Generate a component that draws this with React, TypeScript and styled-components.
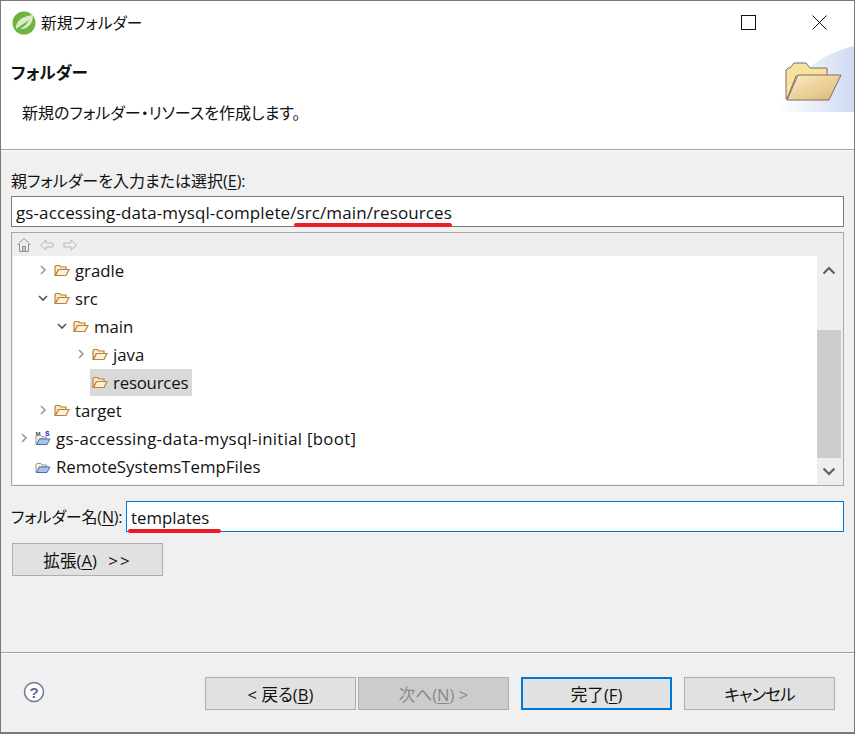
import React from "react";
import styled, { createGlobalStyle } from "styled-components";

const GlobalStyle = createGlobalStyle`
  html, body {
    margin: 0;
    padding: 0;
    background: #f0f0f0;
  }
  body {
    font-family: "Open Sans", "Noto Sans CJK JP", sans-serif;
    font-size: 16px;
    color: #111;
  }
`;

const Dialog = styled.div`
  width: 855px;
  height: 734px;
  box-sizing: border-box;
  border: 1px solid #7a7a7a;
  border-bottom-width: 2px;
  display: flex;
  flex-direction: column;
  background: #f0f0f0;
`;

const TitleBar = styled.div`
  height: 44px;
  flex: none;
  background: #fff;
  display: flex;
  align-items: center;
  padding-left: 11px;
  box-sizing: border-box;
`;

const TitleText = styled.span`
  margin-left: 5px;
  font-size: 15.7px;
  font-feature-settings: "palt";
  flex: 1;
  position: relative;
  top: -1px;
`;

const WindowButton = styled.div`
  width: 69px;
  height: 43px;
  margin-left: 2px;
  align-self: flex-start;
  display: flex;
  align-items: center;
  justify-content: center;
`;

const Banner = styled.div`
  position: relative;
  height: 104px;
  flex: none;
  background: #fff;
  border-bottom: 1px solid #a0a0a0;
  box-shadow: 0 1px 0 #fff;
`;

const BannerTitle = styled.h1`
  margin: 0;
  padding: 16px 0 0 10px;
  font-size: 16.6px;
  line-height: 24px;
  font-weight: 700;
  font-feature-settings: "palt";
`;

const BannerText = styled.p`
  margin: 0;
  padding: 16px 0 0 21px;
  font-size: 16px;
  line-height: 24px;
  font-feature-settings: "palt";
`;

const BannerArt = styled.svg`
  position: absolute;
  right: 0;
  top: 1px;
`;

const Body = styled.div`
  flex: 1;
  display: flex;
  flex-direction: column;
  padding: 19px 10px 0 10px;
  margin-top: 1px;
`;

const FieldLabel = styled.label`
  display: block;
  line-height: 22px;
  height: 22px;
  font-feature-settings: "palt";
  white-space: nowrap;
`;

const Key = styled.span`
  text-decoration: underline;
  text-underline-offset: 2px;
`;

const PathBox = styled.div`
  position: relative;
  height: 31px;
  margin-top: 4px;
  box-sizing: border-box;
  border: 1px solid #7a7a7a;
  background: #fff;
  padding: 0 4px;
  line-height: 31px;
  font-size: 17px;
  letter-spacing: 0.1px;
  white-space: nowrap;
`;

const RedMark = styled.span<{ $left: number; $width: number; $bottom: number }>`
  position: absolute;
  left: ${(p) => p.$left}px;
  width: ${(p) => p.$width}px;
  bottom: ${(p) => p.$bottom}px;
  height: 4px;
  border-radius: 2px;
  background: #ed1c24;
`;

const TreeFrame = styled.div`
  height: 254px;
  margin-top: 5px;
  box-sizing: border-box;
  border: 1px solid #a8a8a8;
  padding: 1px 2px 1px 1px;
  display: flex;
  flex-direction: column;
  background: #eeeeee;
`;

const TreeToolbar = styled.div`
  height: 22px;
  flex: none;
  display: flex;
  align-items: center;
  gap: 7px;
  padding-left: 3px;
`;

const TreeBody = styled.div`
  flex: 1;
  display: flex;
  min-height: 0;
`;

const TreeList = styled.div`
  flex: 1;
  background: #fff;
  overflow: hidden;
`;

const Row = styled.div<{ $depth: number }>`
  height: 28px;
  display: flex;
  align-items: center;
  padding-left: ${(p) => 6 + p.$depth * 19}px;
  white-space: nowrap;
  font-size: 16.8px;
`;

const Twisty = styled.span`
  width: 10px;
  height: 12px;
  flex: none;
  margin-right: 6px;
  display: flex;
  align-items: center;
  justify-content: center;
`;

const NodeLabel = styled.span<{ $selected?: boolean; $spacing?: number }>`
  display: inline-flex;
  align-items: center;
  gap: 5px;
  height: 27px;
  margin-left: -2px;
  padding: 0 4px 0 2px;
  letter-spacing: ${(p) => p.$spacing ?? 0}px;
  background: ${(p) => (p.$selected ? "#d9d9d9" : "transparent")};
`;

const ScrollBar = styled.div`
  width: 24px;
  flex: none;
  background: #eeeeee;
  display: flex;
  flex-direction: column;
`;

const ScrollArrow = styled.div`
  height: 26px;
  flex: none;
  display: flex;
  align-items: center;
  justify-content: center;
`;

const ScrollTrack = styled.div`
  flex: 1;
  display: flex;
  flex-direction: column;
  justify-content: flex-end;
`;

const ScrollThumb = styled.div`
  height: 128px;
  background: #cdcdcd;
`;

const NameRow = styled.div`
  display: flex;
  align-items: center;
  margin-top: 15px;
`;

const NameLabel = styled(FieldLabel)`
  width: 115px;
  height: 24px;
  line-height: 24px;
  flex: none;
  letter-spacing: -0.15px;
`;

const NameInput = styled.div`
  position: relative;
  flex: 1;
  height: 31px;
  box-sizing: border-box;
  border: 1px solid #0078d7;
  background: #fff;
  padding: 0 4px;
  line-height: 31px;
  font-size: 16.8px;
`;

const Button = styled.button<{ $focused?: boolean; $disabled?: boolean; $spacing?: number }>`
  width: 151px;
  height: 33px;
  padding: 0;
  box-sizing: border-box;
  font: inherit;
  font-size: 16.6px;
  font-feature-settings: "palt";
  letter-spacing: ${(p) => p.$spacing ?? 0}px;
  color: ${(p) => (p.$disabled ? "#8a8a8a" : "#111")};
  background: ${(p) => (p.$disabled ? "#cccccc" : "#e1e1e1")};
  border: ${(p) => (p.$focused ? "2px solid #0078d7" : "1px solid #adadad")};
`;

const Arrows = styled.span`
  margin-left: 5px;
  letter-spacing: 2px;
  font-size: 17px;
`;

const ExpandRow = styled.div`
  margin-top: 11px;
  padding-left: 1px;
`;

const Footer = styled.div`
  height: 80px;
  box-sizing: border-box;
  flex: none;
  border-top: 1px solid #a0a0a0;
  box-shadow: inset 0 1px 0 #fff;
  display: flex;
  align-items: flex-start;
  padding: 24px 19px 0 22px;
`;

const HelpIcon = styled.svg`
  margin-top: 4px;
  margin-right: auto;
`;

const ButtonGroup = styled.div<{ $gap: number }>`
  display: flex;
  gap: ${(p) => p.$gap}px;
`;

const FolderIcon = () => (
  <svg width="16" height="13" viewBox="0 0 16 13">
    <path d="M1 11.5V2.5L2 1.5H5.5L7 3H12V5.5H4.5L1.5 11.5Z" fill="#fbe9c8" stroke="#b9823f" strokeWidth="1.2" />
    <path d="M1.5 11.5L4.5 5.5H15L12 11.5Z" fill="#fdf0d6" stroke="#b9823f" strokeWidth="1.2" />
  </svg>
);

const ProjectFolderIcon = ({ badge }: { badge?: boolean }) => (
  <svg width="16" height="16" viewBox="0 0 16 16">
    {badge && (
      <>
        <text x="0.5" y="5.5" fontSize="6" fontWeight="700" fill="#2a4f80" fontFamily="Liberation Sans, sans-serif">M</text>
        <text x="10" y="6" fontSize="7.5" fontWeight="700" fill="#1414d8" fontFamily="Liberation Mono, monospace">S</text>
      </>
    )}
    <path d="M1 14.5V6.5L2 5.5H6L7 7H11.5V9H4.5L1.5 14.5Z" fill="#fdf3d8" stroke="#8a93b0" />
    <path d="M1.5 14.5L4.5 9H15L12 14.5Z" fill="#a8c4ea" stroke="#4a6ea8" />
  </svg>
);

const Chevron = ({ open }: { open?: boolean }) => (
  <svg width="10" height="10" viewBox="0 0 10 10">
    {open ? (
      <path d="M1 3L5 7L9 3" fill="none" stroke="#555" strokeWidth="1.6" />
    ) : (
      <path d="M3 1L7 5L3 9" fill="none" stroke="#999" strokeWidth="1.6" />
    )}
  </svg>
);

const ScrollChevron = ({ up }: { up?: boolean }) => (
  <svg width="12" height="9" viewBox="0 0 12 9">
    <path d={up ? "M0.5 8.5L6 3L11.5 8.5" : "M0.5 1.5L6 7L11.5 1.5"} fill="none" stroke="#606060" strokeWidth="2.2" />
  </svg>
);

const rows = [
  { name: "gradle", depth: 1 },
  { name: "src", depth: 1, open: true },
  { name: "main", depth: 2, open: true },
  { name: "java", depth: 3 },
  { name: "resources", depth: 3, selected: true, leaf: true, spacing: -0.2 },
  { name: "target", depth: 1 },
  { name: "gs-accessing-data-mysql-initial [boot]", depth: 0, project: true, spacing: 0.3 },
  { name: "RemoteSystemsTempFiles", depth: 0, remote: true, leaf: true },
];

const App = (): JSX.Element => {
  return (
    <React.Fragment>
      <GlobalStyle />
      <Dialog>
        <TitleBar>
          <svg width="24" height="24" viewBox="0 0 24 24">
            <circle cx="12" cy="12" r="11.5" fill="#6db33f" />
            <path d="M4 18C3 9 12 5 21 4C21 13 15 19 8 18C12 16 15 13 17 9C13 12 8 15 4 18Z" fill="#d9ecc6" />
          </svg>
          <TitleText>新規フォルダー</TitleText>
          <WindowButton>
            <svg width="15" height="15" viewBox="0 0 15 15">
              <rect x="0.5" y="0.5" width="14" height="14" fill="none" stroke="#111" />
            </svg>
          </WindowButton>
          <WindowButton>
            <svg width="15" height="15" viewBox="0 0 15 15">
              <path d="M0.5 0.5L14.5 14.5M14.5 0.5L0.5 14.5" stroke="#111" />
            </svg>
          </WindowButton>
        </TitleBar>
        <Banner>
          <BannerTitle>フォルダー</BannerTitle>
          <BannerText>新規のフォルダー・リソースを作成します。</BannerText>
          <BannerArt width="76" height="66" viewBox="0 0 76 66">
            <defs>
              <linearGradient id="swoosh" x1="0" y1="0" x2="1" y2="0">
                <stop offset="0" stopColor="#fff" />
                <stop offset="1" stopColor="#cfdbf3" />
              </linearGradient>
              <linearGradient id="front" x1="0" y1="0" x2="1" y2="1">
                <stop offset="0" stopColor="#fdeec6" />
                <stop offset="1" stopColor="#d9b673" />
              </linearGradient>
            </defs>
            <path d="M0 66C6 36 40 8 76 0V66Z" fill="url(#swoosh)" />
            <path d="M8 53V24L10 22H12L16 17H28L32 22H49V30H18L9 53Z" fill="#f6e3a0" stroke="#86695c" strokeWidth="1" />
            <path d="M9 54L20 29L63 29L51 54Z" fill="url(#front)" stroke="#86695c" strokeWidth="1" />
          </BannerArt>
        </Banner>
        <Body>
          <FieldLabel>
            親フォルダーを入力または選択(<Key>E</Key>):
          </FieldLabel>
          <PathBox>
            gs-accessing-data-mysql-complete/src/main/resources
            <RedMark $left={282} $width={158} $bottom={-1} />
          </PathBox>
          <TreeFrame>
            <TreeToolbar>
              <svg width="16" height="16" viewBox="0 0 16 16">
                <path d="M1.5 8L8 1.5L14.5 8M3.5 7V14.5H12.5V7" fill="none" stroke="#8f8f8f" />
                <rect x="6.5" y="9.5" width="3" height="5" fill="#ccc" stroke="#8f8f8f" />
              </svg>
              <svg width="16" height="16" viewBox="0 0 16 16">
                <path d="M1.5 8L7 3V6H14V10H7V13Z" fill="#eee" stroke="#b8b8b8" />
              </svg>
              <svg width="16" height="16" viewBox="0 0 16 16">
                <path d="M14.5 8L9 3V6H2V10H9V13Z" fill="#eee" stroke="#b8b8b8" />
              </svg>
            </TreeToolbar>
            <TreeBody>
              <TreeList>
                {rows.map((row) => (
                  <Row key={row.name} $depth={row.depth}>
                    <Twisty>{!row.leaf && <Chevron open={row.open} />}</Twisty>
                    <NodeLabel $selected={row.selected} $spacing={row.spacing}>
                      {row.project || row.remote ? <ProjectFolderIcon badge={row.project} /> : <FolderIcon />}
                      {row.name}
                    </NodeLabel>
                  </Row>
                ))}
              </TreeList>
              <ScrollBar>
                <ScrollArrow>
                  <ScrollChevron up />
                </ScrollArrow>
                <ScrollTrack>
                  <ScrollThumb />
                </ScrollTrack>
                <ScrollArrow>
                  <ScrollChevron />
                </ScrollArrow>
              </ScrollBar>
            </TreeBody>
          </TreeFrame>
          <NameRow>
            <NameLabel>
              フォルダー名(<Key>N</Key>):
            </NameLabel>
            <NameInput>
              templates
              <RedMark $left={1} $width={93} $bottom={-2} />
            </NameInput>
          </NameRow>
          <ExpandRow>
            <Button>
              拡張(<Key>A</Key>)<Arrows> &gt;&gt;</Arrows>
            </Button>
          </ExpandRow>
        </Body>
        <Footer>
          <HelpIcon width="22" height="22" viewBox="0 0 22 22">
            <circle cx="11" cy="11" r="9.5" fill="#fff" stroke="#6a7a96" strokeWidth="1.5" />
            <text x="11" y="16.5" textAnchor="middle" fontSize="15" fontWeight="700" fill="#5a6a88" fontFamily="Liberation Sans, sans-serif">?</text>
          </HelpIcon>
          <ButtonGroup $gap={12}>
            <ButtonGroup $gap={2}>
              <Button>
                &lt; 戻る(<Key>B</Key>)
              </Button>
              <Button $disabled>
                次へ(<Key>N</Key>) &gt;
              </Button>
            </ButtonGroup>
            <Button $focused>
              完了(<Key>F</Key>)
            </Button>
            <Button $spacing={-1}>キャンセル</Button>
          </ButtonGroup>
        </Footer>
      </Dialog>
    </React.Fragment>
  );
};

export default App;
